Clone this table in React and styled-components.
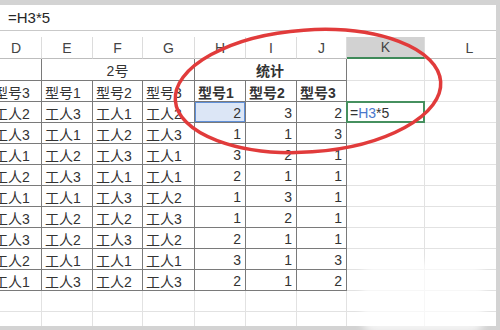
import React from 'react';
import styled, { createGlobalStyle, css } from 'styled-components';

const GlobalStyle = createGlobalStyle`
  body {
    margin: 0;
    background: #fff;
  }
`;

const FONT = `"Liberation Sans", "Noto Sans CJK SC", sans-serif`;

const Frame = styled.div`
  position: relative;
  width: 500px;
  height: 330px;
  box-sizing: border-box;
  padding: 5px 4px 4px 0;
  background: #d3d3d3;
  overflow: hidden;
  font-family: ${FONT};
`;

const Window = styled.div`
  height: 100%;
  background: #fff;
  overflow: hidden;
  display: flex;
  flex-direction: column;
`;

const FormulaBar = styled.div`
  height: 25px;
  flex: none;
  display: flex;
  align-items: center;
  padding-left: 8px;
  border-bottom: 1px solid #c9c9c9;
  font-size: 15px;
  color: #262626;
`;

const Sheet = styled.div`
  display: grid;
  grid-template-columns: 51px 51px 50px 52px 51px 51px 50px 78px 90px;
  grid-template-rows: 22px 22px 21px;
  grid-auto-rows: 21px;
  margin: 6px 0 0 -9px;
`;

const ColHead = styled.div`
  display: flex;
  align-items: flex-end;
  justify-content: center;
  padding-bottom: 2px;
  box-sizing: border-box;
  font-size: 14px;
  color: #444;
  border-right: 1px solid #dcdcdc;
  border-bottom: 1px solid #bdbdbd;
  ${(p) =>
    p.$active &&
    css`
      background: #d2d2d2;
      border-bottom: 2px solid #3f8a59;
    `}
`;

const Cell = styled.div`
  display: flex;
  align-items: center;
  box-sizing: border-box;
  min-width: 0;
  overflow: hidden;
  white-space: nowrap;
  font-size: 14px;
  color: #333;
  padding: 1px 4px 0 3px;
  border-right: 1px solid ${(p) => (p.$table ? '#7a7a7a' : '#e2e2e2')};
  border-bottom: 1px solid ${(p) => (p.$table ? '#7a7a7a' : '#e2e2e2')};
  justify-content: ${(p) =>
    p.$align === 'right' ? 'flex-end' : p.$align === 'center' ? 'center' : 'flex-start'};
  font-weight: ${(p) => (p.$bold ? 700 : 400)};
  ${(p) => p.$span && css`grid-column: span ${p.$span};`}
  ${(p) =>
    p.$ref &&
    css`
      background: #dce6f6;
      box-shadow: inset 0 0 0 1px #5f8fd8;
    `}
  ${(p) =>
    p.$edit &&
    css`
      margin: -1px 0 0 -1px;
      border: 2px solid #46905f;
      padding-left: 2px;
    `}
`;

const RefName = styled.span`
  color: #4a78cc;
`;

const Overlay = styled.svg`
  position: absolute;
  inset: 0;
  pointer-events: none;
`;

/* faded patch left over in the lower right corner */
const Patch = styled.div`
  position: absolute;
  left: 362px;
  top: 262px;
  width: 122px;
  height: 72px;
  border-radius: 14px;
  background: rgba(255, 255, 255, 0.72);
  filter: blur(4px);
`;

const columns = ['D', 'E', 'F', 'G', 'H', 'I', 'J', 'K', 'L'];

const rows = [
  [['工人2', '工人3', '工人1', '工人2'], [2, 3, 2]],
  [['工人3', '工人1', '工人2', '工人3'], [1, 1, 3]],
  [['工人1', '工人2', '工人3', '工人1'], [3, 2, 1]],
  [['工人2', '工人3', '工人1', '工人1'], [2, 1, 1]],
  [['工人1', '工人1', '工人3', '工人2'], [1, 3, 1]],
  [['工人3', '工人2', '工人2', '工人3'], [1, 2, 1]],
  [['工人3', '工人2', '工人3', '工人2'], [2, 1, 1]],
  [['工人2', '工人1', '工人1', '工人1'], [3, 1, 3]],
  [['工人1', '工人3', '工人2', '工人3'], [2, 1, 2]],
];

const Formula = () => (
  <>
    =<RefName>H3</RefName>*5
  </>
);

export default function App() {
  return (
    <>
      <GlobalStyle />
      <Frame>
        <Window>
          <FormulaBar>=H3*5</FormulaBar>
          <Sheet>
            {columns.map((c) => (
              <ColHead key={c} $active={c === 'K'}>
                {c}
              </ColHead>
            ))}

            <Cell $table />
            <Cell $table $span={3} $align="center">2号</Cell>
            <Cell $table $span={3} $align="center" $bold>统计</Cell>
            <Cell />
            <Cell />

            <Cell $table>型号3</Cell>
            <Cell $table>型号1</Cell>
            <Cell $table>型号2</Cell>
            <Cell $table>型号3</Cell>
            <Cell $table $bold>型号1</Cell>
            <Cell $table $bold>型号2</Cell>
            <Cell $table $bold>型号3</Cell>
            <Cell />
            <Cell />

            {rows.map(([workers, counts], r) => (
              <React.Fragment key={r}>
                {workers.map((w, i) => (
                  <Cell key={'w' + i} $table>{w}</Cell>
                ))}
                {counts.map((n, i) => (
                  <Cell key={'n' + i} $table $align="right" $ref={r === 0 && i === 0}>
                    {n}
                  </Cell>
                ))}
                {r === 0 ? (
                  <Cell $edit>
                    <Formula />
                  </Cell>
                ) : (
                  <Cell />
                )}
                <Cell />
              </React.Fragment>
            ))}

            {[0, 1].map((r) =>
              columns.map((c) => <Cell key={'e' + r + c} />)
            )}
          </Sheet>
        </Window>

        <Patch />

        <Overlay width="500" height="330" viewBox="0 0 500 330">
          <ellipse
            cx="308"
            cy="91"
            rx="133"
            ry="61"
            transform="rotate(-4 308 91)"
            fill="none"
            stroke="#e13b3b"
            strokeWidth="3.5"
          />
        </Overlay>
      </Frame>
    </>
  );
}
